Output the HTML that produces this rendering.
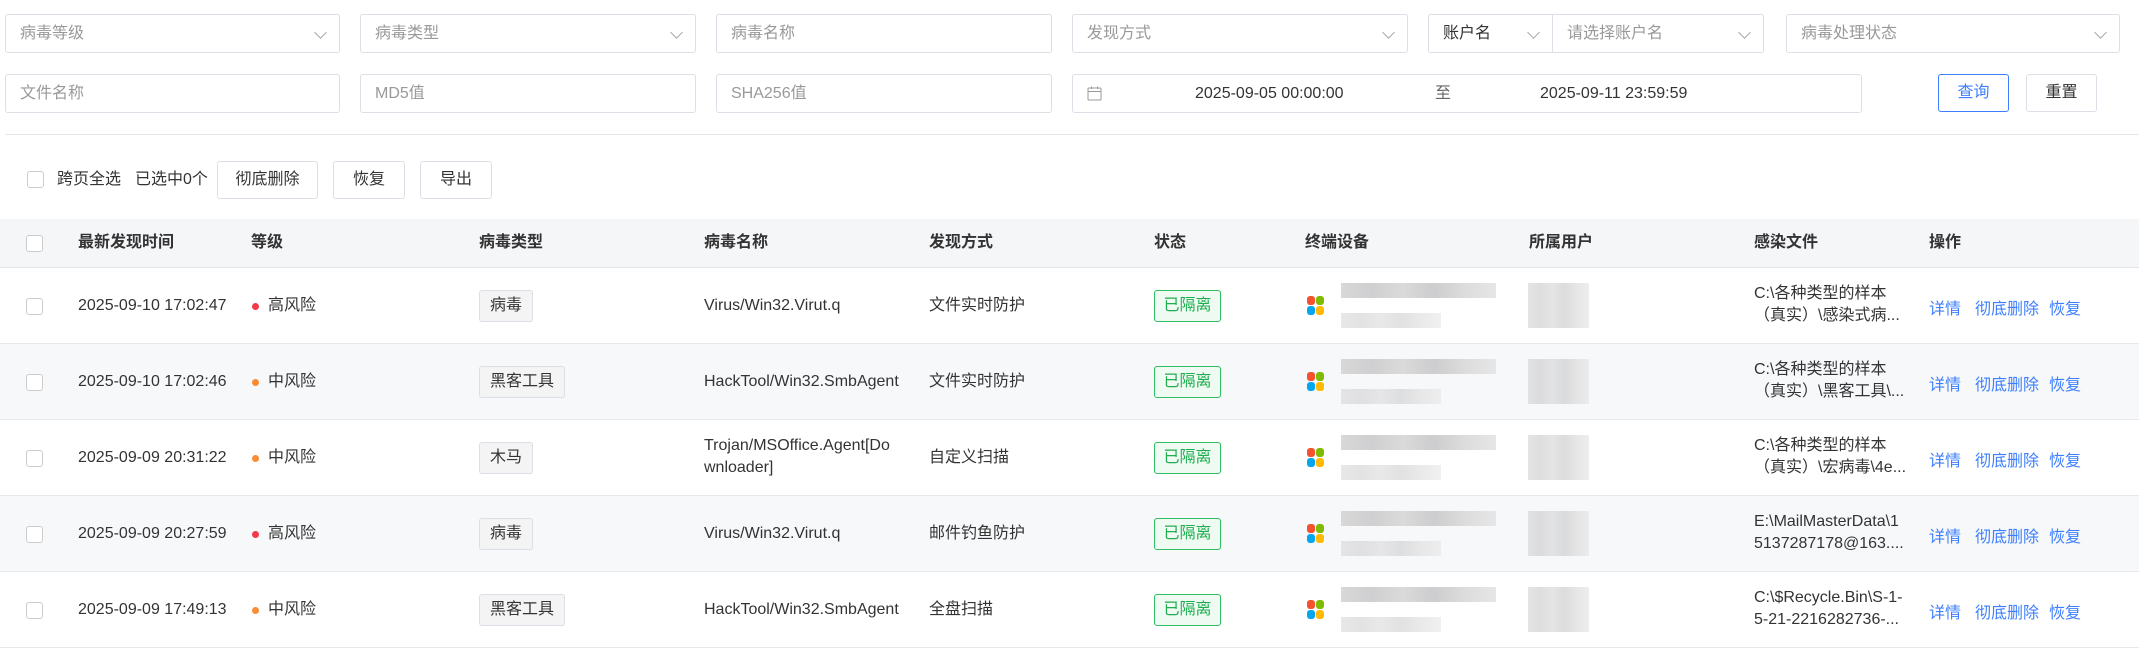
<!DOCTYPE html>
<html><head><meta charset="utf-8"><style>
*{box-sizing:border-box;margin:0;padding:0}
body{width:2139px;height:649px;background:#fff;font-family:"Liberation Sans","Noto Sans CJK SC",sans-serif;font-size:16px;color:#333;position:relative;overflow:hidden}
.a{position:absolute}
.in{position:absolute;height:39px;border:1px solid #dcdfe6;border-radius:3px;color:#999;line-height:37px;padding-left:14px;font-size:16px;background:#fff}
.arr{position:absolute;right:14px;top:13px;width:9px;height:9px;border-right:1.3px solid #aaa;border-bottom:1.3px solid #aaa;transform:rotate(45deg)}
.btn{position:absolute;height:38px;border:1px solid #dcdfe6;border-radius:3px;line-height:36px;text-align:center;font-size:16px;color:#333;background:#fff}
.cb{position:absolute;width:17px;height:17px;border:1px solid #ccc;border-radius:3px;background:#fff}
.row{position:absolute;left:0;width:2139px;height:76px;border-bottom:1px solid #e6e8ee}
.g{background:#f7f8fa}
.c{position:absolute;line-height:22px}
.tag{position:absolute;height:32px;line-height:30px;padding:0 10px;border:1px solid #dcdfe6;border-radius:3px;background:#f4f4f5;font-size:16px}
.st{position:absolute;height:32px;line-height:30px;width:67px;text-align:center;border:1px solid #2fbf62;color:#1fae4f;background:#effbf2;border-radius:3px;font-size:16px}
.dot{position:absolute;width:7px;height:7px;border-radius:50%}
.win{position:absolute;width:18px;height:20px}
.win i{position:absolute;width:8px;height:9px;border-radius:3px}
.blur{position:absolute;background:linear-gradient(90deg,#d8d8d8,#cfcfd1 20%,#dadada 40%,#cdcdcf 60%,#dcdcdc 80%,#e6e6e6)}
.op{position:absolute;color:#3d7fff}
</style></head><body>
<div class="in" style="left:5px;top:14px;width:335px">病毒等级<span class="arr"></span></div>
<div class="in" style="left:360px;top:14px;width:336px">病毒类型<span class="arr"></span></div>
<div class="in" style="left:716px;top:14px;width:336px">病毒名称</div>
<div class="in" style="left:1072px;top:14px;width:336px">发现方式<span class="arr"></span></div>
<div class="in" style="left:1428px;top:14px;width:125px;color:#333;border-radius:3px 0 0 3px">账户名<span class="arr"></span></div>
<div class="in" style="left:1552px;top:14px;width:212px;border-radius:0 3px 3px 0">请选择账户名<span class="arr"></span></div>
<div class="in" style="left:1786px;top:14px;width:334px">病毒处理状态<span class="arr"></span></div>

<div class="in" style="left:5px;top:74px;width:335px">文件名称</div>
<div class="in" style="left:360px;top:74px;width:336px">MD5值</div>
<div class="in" style="left:716px;top:74px;width:336px">SHA256值</div>
<div class="in" style="left:1072px;top:74px;width:790px;color:#333">
<svg class="a" style="left:14px;top:11px" width="15" height="15" viewBox="0 0 15 15"><rect x="1" y="2" width="13" height="12" rx="1" fill="none" stroke="#999"/><line x1="1" y1="5.5" x2="14" y2="5.5" stroke="#999"/><line x1="4.5" y1="0.5" x2="4.5" y2="3" stroke="#999"/><line x1="10.5" y1="0.5" x2="10.5" y2="3" stroke="#999"/></svg>
<span class="a" style="left:122px">2025-09-05 00:00:00</span><span class="a" style="left:362px;color:#666">至</span><span class="a" style="left:467px">2025-09-11 23:59:59</span></div>
<div class="btn" style="left:1938px;top:74px;width:71px;border-color:#3d7fff;color:#3d7fff">查询</div>
<div class="btn" style="left:2026px;top:74px;width:71px">重置</div>
<div class="a" style="left:5px;top:134px;width:2134px;height:1px;background:#e6e8ee"></div>

<div class="cb" style="left:27px;top:171px"></div>
<div class="a" style="left:57px;top:169px;line-height:22px">跨页全选</div>
<div class="a" style="left:135px;top:169px;line-height:22px">已选中0个</div>
<div class="btn" style="left:217px;top:161px;width:101px">彻底删除</div>
<div class="btn" style="left:333px;top:161px;width:72px">恢复</div>
<div class="btn" style="left:420px;top:161px;width:72px">导出</div>

<div class="a" style="left:0;top:219px;width:2139px;height:49px;background:#f5f6f8;border-bottom:1px solid #e2e4ea;font-weight:bold">
<div class="cb" style="left:26px;top:16px"></div>
<div class="c" style="left:78px;top:13px">最新发现时间</div>
<div class="c" style="left:251px;top:13px">等级</div>
<div class="c" style="left:479px;top:13px">病毒类型</div>
<div class="c" style="left:704px;top:13px">病毒名称</div>
<div class="c" style="left:929px;top:13px">发现方式</div>
<div class="c" style="left:1154px;top:13px">状态</div>
<div class="c" style="left:1305px;top:13px">终端设备</div>
<div class="c" style="left:1529px;top:13px">所属用户</div>
<div class="c" style="left:1754px;top:13px">感染文件</div>
<div class="c" style="left:1929px;top:13px">操作</div>
</div>

<!-- rows generated inline -->
<div class="row" style="top:268px">
<div class="cb" style="left:26px;top:30px"></div><div class="c" style="left:78px;top:27px">2025-09-10 17:02:47</div>
<div class="dot" style="left:252px;top:35px;background:#f5384a"></div><div class="c" style="left:268px;top:27px">高风险</div>
<div class="tag" style="left:479px;top:22px">病毒</div><div class="c" style="left:704px;top:27px">Virus/Win32.Virut.q</div>
<div class="c" style="left:929px;top:27px">文件实时防护</div><div class="st" style="left:1154px;top:22px">已隔离</div>
<div class="win" style="left:1307px;top:28px"><i style="left:0;top:0;background:#f4522f"></i><i style="left:9px;top:0;background:#7fba00"></i><i style="left:0;top:10px;background:#05a6f0"></i><i style="left:9px;top:10px;background:#ffb900"></i></div>
<div class="blur" style="left:1341px;top:15px;width:155px;height:15px"></div><div class="blur" style="left:1341px;top:45px;width:100px;height:15px;opacity:.6"></div>
<div class="blur" style="left:1528px;top:15px;width:61px;height:45px;opacity:.7"></div>
<div class="c" style="left:1754px;top:15px">C:\各种类型的样本<br>（真实）\感染式病...</div>
<div class="op" style="left:1929px;top:27px">详情</div><div class="op" style="left:1975px;top:27px">彻底删除</div><div class="op" style="left:2049px;top:27px">恢复</div></div>

<div class="row g" style="top:344px">
<div class="cb" style="left:26px;top:30px"></div><div class="c" style="left:78px;top:27px">2025-09-10 17:02:46</div>
<div class="dot" style="left:252px;top:35px;background:#fa8c35"></div><div class="c" style="left:268px;top:27px">中风险</div>
<div class="tag" style="left:479px;top:22px">黑客工具</div><div class="c" style="left:704px;top:27px">HackTool/Win32.SmbAgent</div>
<div class="c" style="left:929px;top:27px">文件实时防护</div><div class="st" style="left:1154px;top:22px">已隔离</div>
<div class="win" style="left:1307px;top:28px"><i style="left:0;top:0;background:#f4522f"></i><i style="left:9px;top:0;background:#7fba00"></i><i style="left:0;top:10px;background:#05a6f0"></i><i style="left:9px;top:10px;background:#ffb900"></i></div>
<div class="blur" style="left:1341px;top:15px;width:155px;height:15px"></div><div class="blur" style="left:1341px;top:45px;width:100px;height:15px;opacity:.6"></div>
<div class="blur" style="left:1528px;top:15px;width:61px;height:45px;opacity:.7"></div>
<div class="c" style="left:1754px;top:15px">C:\各种类型的样本<br>（真实）\黑客工具\...</div>
<div class="op" style="left:1929px;top:27px">详情</div><div class="op" style="left:1975px;top:27px">彻底删除</div><div class="op" style="left:2049px;top:27px">恢复</div></div>

<div class="row" style="top:420px">
<div class="cb" style="left:26px;top:30px"></div><div class="c" style="left:78px;top:27px">2025-09-09 20:31:22</div>
<div class="dot" style="left:252px;top:35px;background:#fa8c35"></div><div class="c" style="left:268px;top:27px">中风险</div>
<div class="tag" style="left:479px;top:22px">木马</div><div class="c" style="left:704px;top:15px">Trojan/MSOffice.Agent[Do<br>wnloader]</div>
<div class="c" style="left:929px;top:27px">自定义扫描</div><div class="st" style="left:1154px;top:22px">已隔离</div>
<div class="win" style="left:1307px;top:28px"><i style="left:0;top:0;background:#f4522f"></i><i style="left:9px;top:0;background:#7fba00"></i><i style="left:0;top:10px;background:#05a6f0"></i><i style="left:9px;top:10px;background:#ffb900"></i></div>
<div class="blur" style="left:1341px;top:15px;width:155px;height:15px"></div><div class="blur" style="left:1341px;top:45px;width:100px;height:15px;opacity:.6"></div>
<div class="blur" style="left:1528px;top:15px;width:61px;height:45px;opacity:.7"></div>
<div class="c" style="left:1754px;top:15px">C:\各种类型的样本<br>（真实）\宏病毒\4e...</div>
<div class="op" style="left:1929px;top:27px">详情</div><div class="op" style="left:1975px;top:27px">彻底删除</div><div class="op" style="left:2049px;top:27px">恢复</div></div>

<div class="row g" style="top:496px">
<div class="cb" style="left:26px;top:30px"></div><div class="c" style="left:78px;top:27px">2025-09-09 20:27:59</div>
<div class="dot" style="left:252px;top:35px;background:#f5384a"></div><div class="c" style="left:268px;top:27px">高风险</div>
<div class="tag" style="left:479px;top:22px">病毒</div><div class="c" style="left:704px;top:27px">Virus/Win32.Virut.q</div>
<div class="c" style="left:929px;top:27px">邮件钓鱼防护</div><div class="st" style="left:1154px;top:22px">已隔离</div>
<div class="win" style="left:1307px;top:28px"><i style="left:0;top:0;background:#f4522f"></i><i style="left:9px;top:0;background:#7fba00"></i><i style="left:0;top:10px;background:#05a6f0"></i><i style="left:9px;top:10px;background:#ffb900"></i></div>
<div class="blur" style="left:1341px;top:15px;width:155px;height:15px"></div><div class="blur" style="left:1341px;top:45px;width:100px;height:15px;opacity:.6"></div>
<div class="blur" style="left:1528px;top:15px;width:61px;height:45px;opacity:.7"></div>
<div class="c" style="left:1754px;top:15px">E:\MailMasterData\1<br>5137287178@163....</div>
<div class="op" style="left:1929px;top:27px">详情</div><div class="op" style="left:1975px;top:27px">彻底删除</div><div class="op" style="left:2049px;top:27px">恢复</div></div>

<div class="row" style="top:572px">
<div class="cb" style="left:26px;top:30px"></div><div class="c" style="left:78px;top:27px">2025-09-09 17:49:13</div>
<div class="dot" style="left:252px;top:35px;background:#fa8c35"></div><div class="c" style="left:268px;top:27px">中风险</div>
<div class="tag" style="left:479px;top:22px">黑客工具</div><div class="c" style="left:704px;top:27px">HackTool/Win32.SmbAgent</div>
<div class="c" style="left:929px;top:27px">全盘扫描</div><div class="st" style="left:1154px;top:22px">已隔离</div>
<div class="win" style="left:1307px;top:28px"><i style="left:0;top:0;background:#f4522f"></i><i style="left:9px;top:0;background:#7fba00"></i><i style="left:0;top:10px;background:#05a6f0"></i><i style="left:9px;top:10px;background:#ffb900"></i></div>
<div class="blur" style="left:1341px;top:15px;width:155px;height:15px"></div><div class="blur" style="left:1341px;top:45px;width:100px;height:15px;opacity:.6"></div>
<div class="blur" style="left:1528px;top:15px;width:61px;height:45px;opacity:.7"></div>
<div class="c" style="left:1754px;top:15px">C:\$Recycle.Bin\S-1-<br>5-21-2216282736-...</div>
<div class="op" style="left:1929px;top:27px">详情</div><div class="op" style="left:1975px;top:27px">彻底删除</div><div class="op" style="left:2049px;top:27px">恢复</div></div>
</body></html>
